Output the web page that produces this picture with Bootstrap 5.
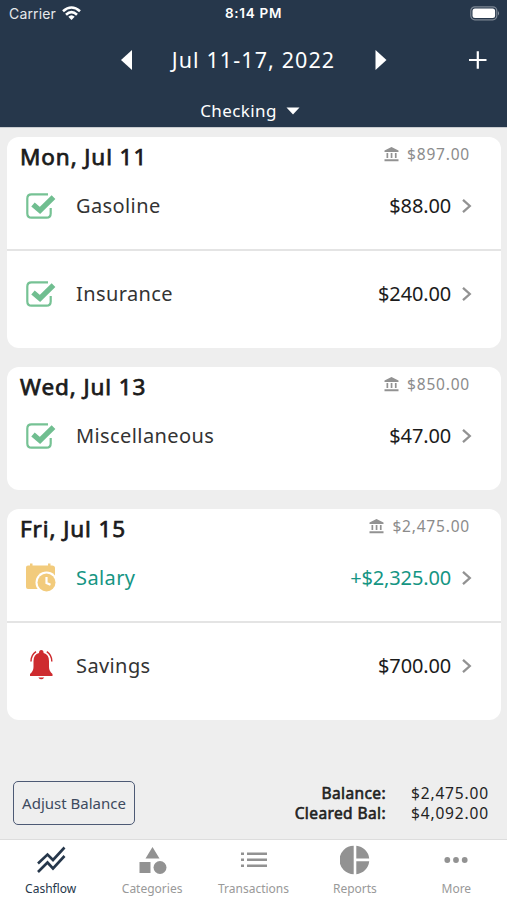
<!DOCTYPE html>
<html lang="en">
<head>
<meta charset="utf-8">
<meta name="viewport" content="width=device-width, initial-scale=1">
<title>Cashflow</title>
<link href="https://cdn.jsdelivr.net/npm/bootstrap@5.3.0/dist/css/bootstrap.min.css" rel="stylesheet">
<style>
body{font-family:"Noto Sans","Open Sans",sans-serif;color:#222;background:#eee;height:900px;overflow:hidden;line-height:1}
svg{display:block;flex:none}
.top-area{background:#26374b;height:128px;border-bottom:1px solid #c9ccd0;color:#fff}
.status{height:27px;font:14px/27px Inter,sans-serif}
.status-side{width:200px;padding-left:9px;gap:6px}
.carrier{letter-spacing:.15px;color:#e6e9ec}
.battery{padding-right:7px}
.time{font-weight:600;font-size:13.5px;letter-spacing:.7px}
.week-row{height:66px}
.week{font-size:21.5px;letter-spacing:1.1px;width:166px;white-space:nowrap}
.edge{width:119px}
.account{height:34px;font-size:17px;letter-spacing:.4px;padding-right:7px}
.account svg{margin:1px 0 0 9px}
.days{padding:9px 6px 0 7px;gap:19px}
.day{border-radius:12px;padding-bottom:10px;background:#fff}
.day-head{height:25px;padding:0 31px 0 13px}
.day-name{font-size:22.5px;font-weight:400;-webkit-text-stroke:.75px #1b1b1b;padding-top:6px;margin:0;letter-spacing:.9px;color:#1b1b1b}
.bank{font-size:15.5px;color:#8b8b8b;gap:8px;padding-top:10px;letter-spacing:.8px}
.entry{height:88px;padding:0 28px 0 17px;font-size:20px}
.entry+.entry{border-top:2px solid #e4e4e4;margin-top:-1px}
.day:has(.entry+.entry){padding-bottom:11px}
.entry-icon{width:34px;height:34px}
.entry-name{margin-left:18px;letter-spacing:.4px;color:#333}
.amount{margin-right:10px;letter-spacing:-.15px;color:#1b1b1b}
.income .entry-name,.income .amount{color:#159583}
.bottom-area{height:119px;padding:0 18px 14px 13px}
.adjust{width:122px;height:44px;border:1.5px solid #4d5a75;border-radius:5px;font-size:15px;color:#3d4a5e;padding:0;white-space:nowrap}
.totals{font-size:15.5px;line-height:20px;text-align:right;padding-bottom:2px}
.totals b{font-weight:400;-webkit-text-stroke:.6px #222;letter-spacing:.4px}
.total-value{width:103px;letter-spacing:.85px}
.tabs{height:61px;border-top:1px solid #ddd;background:#fff}
.tab{padding-top:5px;font-size:12px;gap:8px;color:#999}
.tab svg{color:#929292}
.tab.on,.tab.on svg{color:#26374b}
</style>
<script src="https://cdn.jsdelivr.net/npm/bootstrap@5.3.0/dist/js/bootstrap.bundle.min.js"></script>
</head>
<body class="d-flex flex-column">
<svg width="0" height="0" class="d-none">
<symbol id="check" viewBox="0 0 34 34"><path d="M24 5.300H7.500Q3.300 5.300 3.300 9.500V24.500Q3.300 28.700 7.500 28.700H22.500Q26.700 28.700 26.700 24.500V19" fill="none" stroke="#76c294" stroke-width="2.200"/><path d="M9 15.500L16 21.500L29.500 8.200" fill="none" stroke="#70be90" stroke-width="5.300"/></symbol>
<symbol id="bank" viewBox="0 0 15 15"><path d="M7.500 0L14.500 3.500V5H.5V3.500zM2.500 6h1.700v5H2.500zM6.700 6h1.700v5H6.700zM10.900 6h1.700v5H10.900zM.5 12.300h14v2H.5z" fill="#929292"/></symbol>
<symbol id="chev" viewBox="0 0 12 16"><path d="M2 1.800L8.800 8L2 14.200" fill="none" stroke="#929292" stroke-width="2.300"/></symbol>
</svg>

<header class="top-area flex-shrink-0">
  <div class="status d-flex justify-content-between align-items-center">
    <div class="status-side d-flex align-items-center"><span class="carrier">Carrier</span>
      <svg width="19" height="15" viewBox="0 0 19 15" fill="none" stroke="#fff" stroke-width="2.600"><path d="M1 5.300Q9.500-2.300 18 5.300M4 8.800Q9.500 3.600 15 8.800"/><path d="M6.300 10.700Q9.500 7.700 12.700 10.700L9.500 14z" fill="#fff" stroke="none"/></svg>
    </div>
    <span class="time">8:14 PM</span>
    <div class="status-side battery d-flex justify-content-end"><svg width="30" height="15" viewBox="0 0 30 15"><rect x=".8" y=".8" width="26" height="13" rx="4" fill="none" stroke="#7c8794" stroke-width="1.200"/><rect x="2.500" y="2.500" width="22.600" height="9.600" rx="2.500" fill="#fff"/><path d="M28 5q2 2.300 0 4.600z" fill="#8d97a2"/></svg></div>
  </div>
  <div class="week-row d-flex align-items-center">
    <div class="edge"></div>
    <svg width="14" height="20" viewBox="0 0 14 20"><path d="M13 0V20L2 10z" fill="#fff"/></svg>
    <div class="week flex-grow-1 text-center">Jul 11-17, 2022</div>
    <svg width="14" height="20" viewBox="0 0 14 20"><path d="M1.500 0V20L12.500 10z" fill="#fff"/></svg>
    <div class="edge d-flex justify-content-end pe-3"><svg width="25" height="20" viewBox="0 0 25 20"><path d="M3 10H20.500M11.800 1.300V18.700" stroke="#fff" stroke-width="2.200"/></svg></div>
  </div>
  <div class="account d-flex justify-content-center align-items-center"><span>Checking</span>
    <svg width="14" height="8" viewBox="0 0 14 8"><path d="M.5.500H13.500L7 7.500z" fill="#fff"/></svg>
  </div>
</header>

<main class="days d-flex flex-column flex-grow-1">
  <section class="day">
    <div class="day-head d-flex justify-content-between align-items-start"><h2 class="day-name">Mon, Jul 11</h2><div class="bank d-flex"><svg width="15" height="15"><use href="#bank"/></svg><span>$897.00</span></div></div>
    <div class="entry d-flex align-items-center"><svg class="entry-icon"><use href="#check"/></svg><span class="entry-name flex-grow-1">Gasoline</span><span class="amount">$88.00</span><svg width="12" height="16"><use href="#chev"/></svg></div>
    <div class="entry d-flex align-items-center"><svg class="entry-icon"><use href="#check"/></svg><span class="entry-name flex-grow-1">Insurance</span><span class="amount">$240.00</span><svg width="12" height="16"><use href="#chev"/></svg></div>
  </section>
  <section class="day">
    <div class="day-head d-flex justify-content-between align-items-start"><h2 class="day-name">Wed, Jul 13</h2><div class="bank d-flex"><svg width="15" height="15"><use href="#bank"/></svg><span>$850.00</span></div></div>
    <div class="entry d-flex align-items-center"><svg class="entry-icon"><use href="#check"/></svg><span class="entry-name flex-grow-1">Miscellaneous</span><span class="amount">$47.00</span><svg width="12" height="16"><use href="#chev"/></svg></div>
  </section>
  <section class="day">
    <div class="day-head d-flex justify-content-between align-items-start"><h2 class="day-name">Fri, Jul 15</h2><div class="bank d-flex"><svg width="15" height="15"><use href="#bank"/></svg><span>$2,475.00</span></div></div>
    <div class="entry income d-flex align-items-center">
      <svg class="entry-icon" viewBox="0 0 34 34"><path d="M4 4.500h2V2.500h2.500v2h15.500V2.500h2.500v2H28Q31 4.500 31 7V28H4Q2 28 2 26V6.500Q2 4.500 4 4.500z" fill="#f2cb7c"/><circle cx="22.500" cy="21.500" r="11" fill="#fff"/><circle cx="22.500" cy="21.500" r="9" fill="#f2cb7c"/><path d="M22.500 16V22L26.500 23.800" fill="none" stroke="#fff" stroke-width="2.200"/></svg>
      <span class="entry-name flex-grow-1">Salary</span><span class="amount">+$2,325.00</span><svg width="12" height="16"><use href="#chev"/></svg></div>
    <div class="entry d-flex align-items-center">
      <svg class="entry-icon" viewBox="0 0 34 34"><path d="M15 4Q15 1 17.300 1T19.600 4Q25 5.500 25 12V18Q25 22 28.500 25V27H6V25Q9.500 22 9.500 18V12Q9.500 5.500 15 4zM14.300 28.500h6Q17.300 32.200 14.300 28.500z" fill="#ce2b2f"/><path d="M7 12.500Q7 6 12 2.700M27.800 12.500Q27.800 6 22.800 2.700" fill="none" stroke="#ce2b2f" stroke-width="1.500"/></svg>
      <span class="entry-name flex-grow-1">Savings</span><span class="amount">$700.00</span><svg width="12" height="16"><use href="#chev"/></svg></div>
  </section>
</main>

<div class="bottom-area flex-shrink-0 d-flex justify-content-between align-items-end">
  <button class="adjust btn">Adjust Balance</button>
  <div class="totals">
    <div class="d-flex justify-content-end"><b>Balance:</b><span class="total-value">$2,475.00</span></div>
    <div class="d-flex justify-content-end"><b>Cleared Bal:</b><span class="total-value">$4,092.00</span></div>
  </div>
</div>

<nav class="tabs flex-shrink-0 d-flex">
  <div class="tab on col d-flex flex-column align-items-center"><svg width="30" height="30" viewBox="0 0 30 30" fill="none" stroke="currentColor" stroke-width="2.600"><path d="M2 18.500L11.500 9.500L17 15L28.500 2.500M2 27L11.500 17.500L17 23.500L28.500 11"/></svg><span>Cashflow</span></div>
  <div class="tab col d-flex flex-column align-items-center"><svg width="30" height="30" viewBox="0 0 30 30" fill="currentColor"><path d="M15.500 2L22.500 13.500H8.500zM2.500 17H13.500V28H2.500z"/><circle cx="23" cy="22.500" r="6.500"/></svg><span>Categories</span></div>
  <div class="tab col d-flex flex-column align-items-center"><svg width="30" height="30" viewBox="0 0 30 30" fill="currentColor"><path d="M2 7.500h3v2.500H2zM8 7.500h20v2.500H8zM2 13.500h3v2.500H2zM8 13.500h20v2.500H8zM2 19.500h3v2.500H2zM8 19.500h20v2.500H8z"/></svg><span>Transactions</span></div>
  <div class="tab col d-flex flex-column align-items-center"><svg width="30" height="30" viewBox="0 0 30 30" fill="currentColor"><path d="M13.700.8V29.200A14.200 14.200 0 0 1 13.700.8zM16.300.8A14.200 14.200 0 0 1 29.200 13.500H16.300zM16.300 16.300H29.200A14.200 14.200 0 0 1 16.300 29.200z"/></svg><span>Reports</span></div>
  <div class="tab col d-flex flex-column align-items-center"><svg width="30" height="30" viewBox="0 0 30 30" fill="currentColor"><circle cx="6.300" cy="15" r="2.900"/><circle cx="15" cy="15" r="2.900"/><circle cx="23.700" cy="15" r="2.900"/></svg><span>More</span></div>
</nav>
</body>
</html>
